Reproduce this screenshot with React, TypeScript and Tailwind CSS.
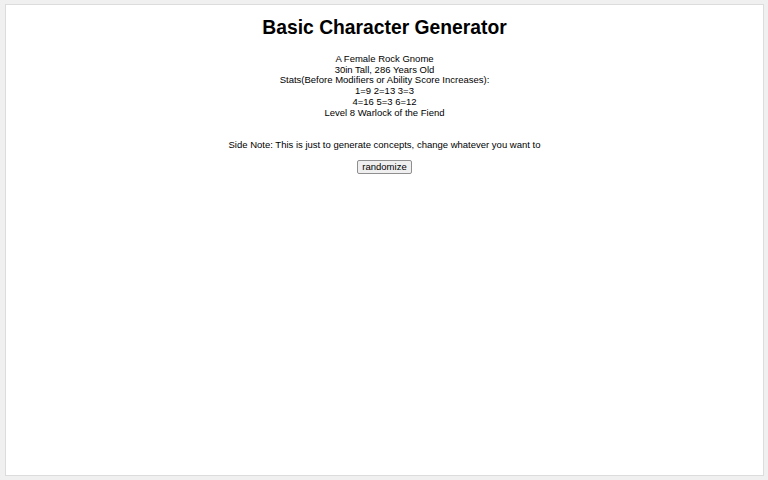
export default function App() {
  return (
    <div
      className="h-[480px] w-[768px] bg-[#f0f0f0] pt-[4px] pl-[5px] pr-[4px] pb-[4px]"
      style={{ fontFamily: '"Liberation Sans", Arial, sans-serif' }}
    >
      <div className="flex h-full flex-col items-center border border-[#dcdcdc] bg-white text-black">
        <h1 className="mt-[11px] text-[19.3px] font-bold leading-[24px]">Basic Character Generator</h1>
        <div className="mt-[14px] text-center text-[9.5px] leading-[10.7px]">
          <div>A Female Rock Gnome</div>
          <div>30in Tall, 286 Years Old</div>
          <div>Stats(Before Modifiers or Ability Score Increases):</div>
          <div>1=9 2=13 3=3</div>
          <div>4=16 5=3 6=12</div>
          <div>Level 8 Warlock of the Fiend</div>
        </div>
        <p className="mt-[21px] text-[9.5px] leading-[11px]">
          Side Note: This is just to generate concepts, change whatever you want to
        </p>
        <button className="mt-[10px] border border-[#8f8f8f] bg-[#efefef] px-[4px] text-[9.5px] leading-[12px] rounded-[2px]">
          randomize
        </button>
      </div>
    </div>
  );
}
